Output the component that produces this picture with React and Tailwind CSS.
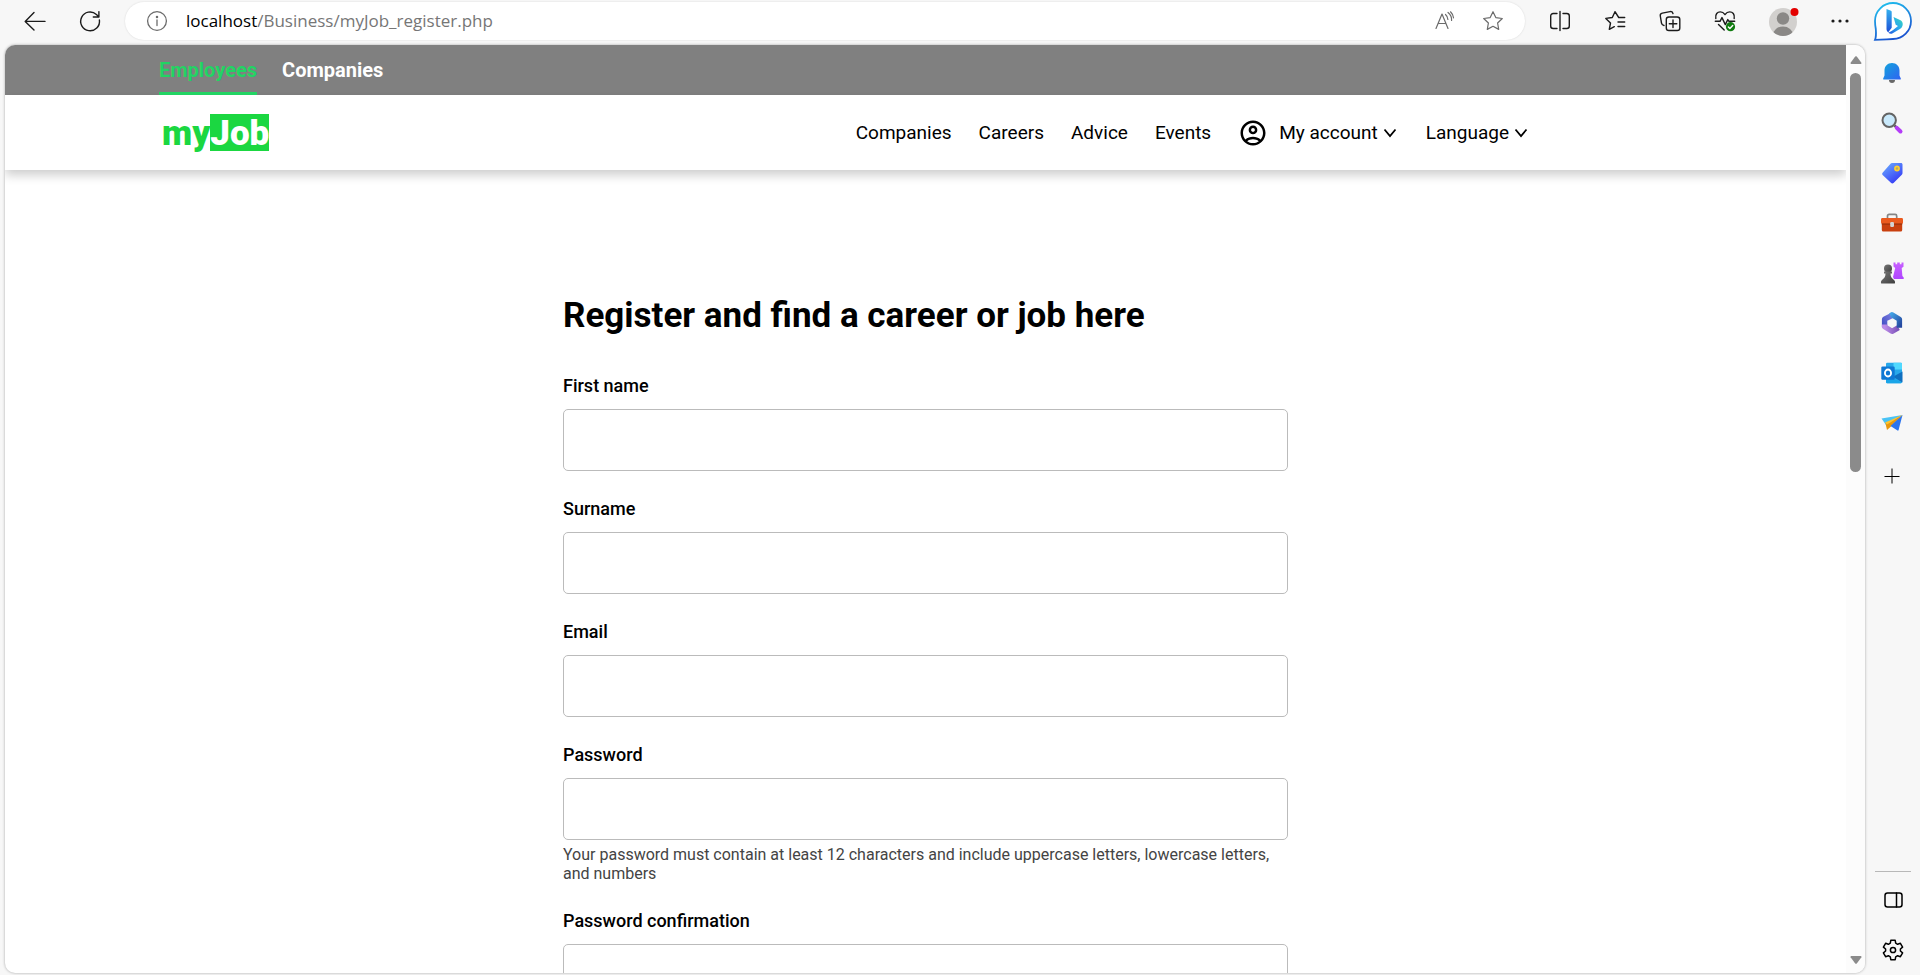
import React from "react";

const outline = {
  fill: "none",
  stroke: "currentColor",
  strokeWidth: 1.4,
  strokeLinecap: "round",
  strokeLinejoin: "round",
};

function Glyph({ children, size = 24, ...rest }) {
  return (
    <svg width={size} height={size} viewBox={`0 0 ${size} ${size}`} aria-hidden="true" {...rest}>
      {children}
    </svg>
  );
}

const BackIcon = () => (
  <Glyph {...outline}>
    <path d="M22 12.4H2.6M11 3.6 2.2 12.4 11 21" />
  </Glyph>
);

const ReloadIcon = () => (
  <Glyph {...outline}>
    <path d="M21.4 11a9.4 9.4 0 1 1-3-5.6L20.6 7.6M20.9 2.6V8h-5.6" />
  </Glyph>
);

const InfoIcon = () => (
  <Glyph {...outline} strokeWidth={1.3}>
    <circle cx="12" cy="12" r="9.4" />
    <path d="M12 11v5.5" />
    <circle cx="12" cy="7.9" r=".6" fill="currentColor" />
  </Glyph>
);

const ReadAloudIcon = () => (
  <Glyph {...outline} strokeWidth={1.2}>
    <path d="M3 19.500 9 5l6 14.500M5.200 14.500h7.600" />
    <path d="M12.500 5.500a7 7 0 0 1 2.400 5M15 3.500a9.500 9.500 0 0 1 3.600 8M17.500 2.800a10 10 0 0 1 3 6" />
  </Glyph>
);

const StarIcon = () => (
  <Glyph {...outline} strokeWidth={1.2}>
    <path d="m12 2.7 2.8 5.9 6.5.9-4.7 4.5 1.1 6.400L12 17.300l-5.700 3.100L7.400 14 2.700 9.500l6.500-.9z" />
  </Glyph>
);

const SplitIcon = () => (
  <Glyph {...outline}>
    <path d="M12 2.500v19M9 4.500H5.200a2.500 2.500 0 0 0-2.500 2.500v10a2.500 2.500 0 0 0 2.500 2.500H9M15 4.500h3.800a2.500 2.500 0 0 1 2.500 2.500v10a2.500 2.500 0 0 1-2.500 2.500H15" />
  </Glyph>
);

const FavoritesIcon = () => (
  <Glyph {...outline}>
    <path d="M21.700 8.500h-6L12 2.700 9.300 8.500l-6.500.9L7.500 14l-1.200 6.400 5-2.700M15 13h6.700M15 17.500h6.700" />
  </Glyph>
);

const CollectionsIcon = () => (
  <Glyph {...outline}>
    <rect x="8.3" y="8" width="13.5" height="13.5" rx="2.6" />
    <path d="M15 11v7.500M11.300 14.800h7.500M6 16.500c-1.500-.2-2.200-1-2.500-2.400L2.300 7c-.3-1.600.5-2.600 2-2.900L12 2.600c1.600-.3 2.700.4 3 2" />
  </Glyph>
);

const HealthIcon = () => (
  <Glyph {...outline}>
    <path d="M2.800 9.500C2 5 4.500 2.900 7.300 2.900c2 0 3.700 1.300 4.700 2.700 1-1.400 2.700-2.700 4.700-2.700 2.800 0 5.300 2.100 4.500 6.600M2.300 12.300H7L9 8.600l3.300 7 2.500-5 1.200 1.700h5.700M5.500 15.500l5.700 5.500" />
    <circle cx="17.5" cy="17.7" r="4.6" fill="#107c10" stroke="none" />
    <path d="m15.400 17.900 1.500 1.500 2.800-3" stroke="#fff" />
  </Glyph>
);

const ProfileIcon = () => (
  <Glyph size={34}>
    <clipPath id="avatar">
      <circle cx="16" cy="18" r="14" />
    </clipPath>
    <g clipPath="url(#avatar)">
      <rect width="34" height="34" fill="#d2d0ce" />
      <circle cx="16" cy="14.5" r="6.2" fill="#8a8886" />
      <ellipse cx="16" cy="31" rx="10" ry="8.5" fill="#8a8886" />
    </g>
    <circle cx="27.5" cy="8" r="4" fill="#e30000" />
  </Glyph>
);

const MoreIcon = () => (
  <Glyph fill="currentColor">
    <circle cx="5" cy="12" r="1.6" />
    <circle cx="12" cy="12" r="1.6" />
    <circle cx="19" cy="12" r="1.6" />
  </Glyph>
);

const BingIcon = () => (
  <Glyph size={42}>
    <defs>
      <linearGradient id="bubble" x1="0" y1="0" x2=".4" y2="1">
        <stop offset="0" stopColor="#22c8f0" />
        <stop offset="1" stopColor="#1a55d0" />
      </linearGradient>
      <linearGradient id="stem" x1="0" y1="0" x2="0" y2="1">
        <stop offset="0" stopColor="#35b2ee" />
        <stop offset="1" stopColor="#1d4fd7" />
      </linearGradient>
      <linearGradient id="bowl" x1="1" y1="0" x2="0" y2="1">
        <stop offset="0" stopColor="#35dcb8" />
        <stop offset=".5" stopColor="#2ba7ee" />
        <stop offset="1" stopColor="#2256dc" />
      </linearGradient>
    </defs>
    <path d="M21 3a18 18 0 1 1 0 36c-5.500 0-8 .8-18 .8 1.300-3 1.200-6 .8-10.800C3.300 26 3 24 3 21A18 18 0 0 1 21 3z" fill="#fff" stroke="url(#bubble)" strokeWidth="1.8" />
    <path d="m14.500 9 4.500 1.700c.4.200.7.600.7 1v16l-3.400 4.600c-1-.7-1.800-1.800-1.800-3.300z" fill="url(#stem)" />
    <path d="m21.500 17 6.500 3c2 1 3 2.600 2.700 4.800-.2 1.800-1.200 3.200-2.800 4.200l-7.200 4.200c-1.600.9-3 .5-4.400-.4 4.500-1.800 6-4 9.700-6.800l-2.300-1.300z" fill="url(#bowl)" />
  </Glyph>
);

const BellIcon = () => (
  <Glyph>
    <defs>
      <linearGradient id="bell" x1="0" y1="0" x2="1" y2="1">
        <stop offset="0" stopColor="#12a5dc" />
        <stop offset="1" stopColor="#2f62f2" />
      </linearGradient>
    </defs>
    <path d="M9 19h6a3 3 0 0 1-6 0z" fill="#686868" />
    <path d="M12 2c4.500 0 7.500 3.200 7.500 7.500v5l1.300 3c.2.500 0 1-.7 1H3.900c-.7 0-.9-.5-.7-1l1.300-3v-5C4.500 5.200 7.500 2 12 2z" fill="url(#bell)" />
  </Glyph>
);

const SearchIcon = () => (
  <Glyph>
    <path d="m14.500 14.500 2.500 2.500" stroke="#606060" strokeWidth="2.5" />
    <path d="m16.800 16.800 3.700 3.700" stroke="#b43cf8" strokeWidth="4" strokeLinecap="round" />
    <circle cx="9.2" cy="9.2" r="6.7" fill="#c9e9fb" stroke="#646464" strokeWidth="2" />
  </Glyph>
);

const TagIcon = () => (
  <Glyph>
    <defs>
      <linearGradient id="tag" x1="0" y1="0" x2=".7" y2="1">
        <stop offset="0" stopColor="#6db2ff" />
        <stop offset="1" stopColor="#3439f5" />
      </linearGradient>
    </defs>
    <path d="M12 2h9c.9 0 1.500.6 1.500 1.500V12c0 .7-.2 1.200-.7 1.700l-8 8c-.9.900-2 .9-2.900 0l-8-7.500c-1-.9-1-1.900-.1-2.800l7.700-8.700C11 2.200 11.400 2 12 2z" fill="url(#tag)" />
    <circle cx="17" cy="7.5" r="2.1" fill="#b8a860" stroke="#ffd02e" strokeWidth="1.6" />
  </Glyph>
);

const ToolboxIcon = () => (
  <Glyph>
    <path d="M7.500 8V5c0-1 .6-1.600 1.600-1.600h6c1 0 1.600.6 1.600 1.600v3" fill="none" stroke="#858585" strokeWidth="1.7" />
    <rect x="1.8" y="11" width="20.4" height="9.5" rx="1.5" fill="#c9400f" />
    <path d="M2.500 7h19c1 0 1.500.5 1.500 1.500v2.800c0 1-.5 1.700-1.500 1.700h-19C1.500 13 1 12.300 1 11.300V8.500C1 7.500 1.500 7 2.500 7z" fill="#eb5a1e" />
    <path d="M1.800 13h20.400" stroke="#8e2b08" />
    <rect x="10.2" y="11" width="3.8" height="5" rx="1.2" fill="#d3d3d3" />
  </Glyph>
);

const ChessIcon = () => (
  <Glyph>
    <defs>
      <linearGradient id="rook" x1="0" y1="0" x2="0" y2="1">
        <stop offset="0" stopColor="#c760ff" />
        <stop offset="1" stopColor="#b045ff" />
      </linearGradient>
      <linearGradient id="pawn" x1="0" y1="0" x2="1" y2="1">
        <stop offset="0" stopColor="#777" />
        <stop offset="1" stopColor="#3e3e3e" />
      </linearGradient>
    </defs>
    <path d="M13.500 1.500h2v1.700h1.700V1.500h2.600v1.700h1.700V1.500h2v4.300L21.700 7l.7 8 1.300 1.500v1.500H14l-1-2 2.200-9-1.700-1.500z" fill="url(#rook)" />
    <circle cx="8" cy="7.5" r="4" fill="url(#pawn)" />
    <path d="M4 10.500h8v2h-1.500c0 3 1 4.600 3.500 6.500 1 .8 1.300 2.200.8 3.500H1.200C.7 21.200 1 19.800 2 19c2.500-1.900 3.500-3.500 3.500-6.500H4z" fill="url(#pawn)" />
  </Glyph>
);

const Microsoft365Icon = () => (
  <Glyph fill="none" strokeWidth="5.4" strokeLinejoin="round">
    <defs>
      <linearGradient id="office-a" x1="0" y1="1" x2="1" y2="0">
        <stop offset="0" stopColor="#4551c6" />
        <stop offset="1" stopColor="#7d7ee0" />
      </linearGradient>
      <linearGradient id="office-b" x1="0" y1="0" x2="1" y2="0">
        <stop offset="0" stopColor="#bd8ce8" />
        <stop offset="1" stopColor="#7a52b8" />
      </linearGradient>
      <linearGradient id="office-c" x1="0" y1="0" x2="1" y2="1">
        <stop offset="0" stopColor="#43a3e5" />
        <stop offset="1" stopColor="#24479f" />
      </linearGradient>
    </defs>
    <path d="M13 4 4.600 8.200v8" stroke="url(#office-a)" />
    <path d="M4.600 13.500v2.300l7.400 4.500 6.500-3.600" stroke="url(#office-b)" />
    <path d="m10.500 4.700 1.500-.9 7.400 4.400v8.500" stroke="url(#office-c)" />
  </Glyph>
);

const OutlookIcon = () => (
  <Glyph>
    <rect x="6" y="1.8" width="16" height="20.4" rx="1.2" fill="#28a8ea" />
    <path d="M13.500 1.800h7.300c.7 0 1.200.5 1.200 1.200v5.500h-8.500z" fill="#50d9ff" />
    <path d="M6 8h8v6H6z" fill="#0364b8" />
    <path d="M13 15.800 22.500 10.500v11z" fill="#0f6fc0" />
    <path d="M6 14.500 22 21.500c-.3.500-.8.700-1.500.7h-13c-.9 0-1.500-.6-1.500-1.500z" fill="#1aa5e8" />
    <rect x="1.3" y="5.5" width="13.4" height="13.2" rx="1.2" fill="#0f78d4" />
    <ellipse cx="8" cy="12" rx="3.1" ry="3.5" fill="none" stroke="#fff" strokeWidth="1.8" />
  </Glyph>
);

const DropIcon = () => (
  <Glyph>
    <path d="M1.500 7.500 22.500 4 6 14z" fill="#49c3f5" />
    <path d="M22.500 4 5.500 12.500 7 19l4-3.500z" fill="#e9980c" />
    <path d="m22.500 4-12 11 7 4.500c.5.300.9.100 1.100-.4z" fill="#2b74ee" />
    <path d="M22.500 4 5 11.500l2 2z" fill="#ffc431" />
  </Glyph>
);

const PlusIcon = () => (
  <Glyph {...outline} strokeLinecap="butt" strokeWidth={1}>
    <path d="M12 4.500v15M4.500 12.500h15" />
  </Glyph>
);

const PanelIcon = () => (
  <Glyph {...outline} strokeWidth={1.5}>
    <rect x="4" y="5" width="17" height="14" rx="2.5" />
    <path d="M15.500 5v14" />
  </Glyph>
);

const GearIcon = () => (
  <Glyph {...outline} strokeWidth={1.5}>
    <circle cx="12" cy="12" r="2.6" />
    <path d="m9.800 2.300-.5 2.900-1.900 1.100-2.800-1-2.200 3.800 2.200 1.900v2l-2.200 1.900 2.200 3.800 2.800-1 1.900 1.100.5 2.900h4.400l.5-2.900 1.900-1.100 2.800 1 2.200-3.800-2.200-1.900v-2l2.200-1.900-2.200-3.800-2.800 1-1.900-1.100-.5-2.900z" />
  </Glyph>
);

const AccountIcon = () => (
  <svg width="30" height="30" viewBox="0 0 24 24" fill="currentColor" aria-hidden="true">
    <path d="M12 2C6.480 2 2 6.480 2 12s4.480 10 10 10 10-4.480 10-10S17.520 2 12 2zM7.350 18.500C8.660 17.560 10.260 17 12 17s3.340.56 4.650 1.500C15.340 19.440 13.740 20 12 20s-3.340-.56-4.650-1.500zm10.790-1.380C16.450 15.800 14.320 15 12 15s-4.450.8-6.140 2.120C4.700 15.730 4 13.950 4 12c0-4.420 3.580-8 8-8s8 3.580 8 8c0 1.950-.7 3.730-1.860 5.120z" />
    <path d="M12 6c-1.930 0-3.500 1.570-3.500 3.500S10.070 13 12 13s3.500-1.570 3.500-3.500S13.930 6 12 6zm0 5c-.83 0-1.500-.67-1.500-1.500S11.170 8 12 8s1.500.67 1.500 1.500S12.830 11 12 11z" />
  </svg>
);

const Chevron = () => (
  <svg width="14" height="10" viewBox="0 0 14 10" fill="none" stroke="currentColor" strokeWidth="1.8" aria-hidden="true">
    <path d="m1.500 1.500 5.500 6.500 5.500-6.500" />
  </svg>
);

function IconButton({ label, className = "", children }) {
  return (
    <button type="button" aria-label={label} className={`flex shrink-0 items-center justify-center ${className}`}>
      {children}
    </button>
  );
}

function Toolbar() {
  return (
    <header className="flex h-[45px] shrink-0 items-start pt-[2px] text-[#1b1b1b]">
      <div className="flex h-[38px] items-center gap-[31px] pl-[23px]">
        <IconButton label="Back"><BackIcon /></IconButton>
        <IconButton label="Refresh"><ReloadIcon /></IconButton>
      </div>
      <div className="ml-[23px] flex h-[38px] min-w-0 flex-1 items-center rounded-full bg-white px-5 text-[#6b6b6b] shadow-[0_0_2px_#0002]">
        <IconButton label="Site information"><InfoIcon /></IconButton>
        <div
          role="textbox"
          aria-label="Address"
          contentEditable
          suppressContentEditableWarning
          className="ml-[17px] min-w-0 flex-1 truncate font-['Open_Sans',sans-serif] text-[17px] leading-6 text-[#767676] outline-none"
        >
          <span className="text-black">localhost</span>/Business/myJob_register.php
        </div>
        <IconButton label="Read aloud"><ReadAloudIcon /></IconButton>
        <IconButton label="Add to favorites" className="ml-6"><StarIcon /></IconButton>
      </div>
      <div className="flex h-[38px] items-center gap-[31px] pl-[23px]">
        <IconButton label="Split screen"><SplitIcon /></IconButton>
        <IconButton label="Favorites"><FavoritesIcon /></IconButton>
        <IconButton label="Collections"><CollectionsIcon /></IconButton>
        <IconButton label="Browser essentials"><HealthIcon /></IconButton>
      </div>
      <div className="flex h-[38px] items-center gap-[27px] pl-[30px] pr-[13px]">
        <IconButton label="Profile"><ProfileIcon /></IconButton>
        <IconButton label="More"><MoreIcon /></IconButton>
      </div>
    </header>
  );
}

const apps = [
  ["Notifications", BellIcon],
  ["Search", SearchIcon],
  ["Shopping", TagIcon],
  ["Tools", ToolboxIcon],
  ["Games", ChessIcon],
  ["Microsoft 365", Microsoft365Icon],
  ["Outlook", OutlookIcon],
  ["Drop", DropIcon],
  ["Customize", PlusIcon],
];

function Sidebar() {
  return (
    <aside className="flex w-[55px] shrink-0 flex-col items-center">
      <IconButton label="Bing chat" className="h-[42px]"><BingIcon /></IconButton>
      <div className="mt-[6px] flex flex-col pr-px">
        {apps.map(([label, Icon]) => (
          <IconButton key={label} label={label} className="h-[50px] last:h-[56px]"><Icon /></IconButton>
        ))}
      </div>
      <div className="mt-auto flex flex-col items-center border-t border-[#b8b8b8] px-[6px] pt-[3px]">
        <IconButton label="Toggle sidebar" className="h-[50px]"><PanelIcon /></IconButton>
        <IconButton label="Settings" className="h-[50px]"><GearIcon /></IconButton>
      </div>
    </aside>
  );
}

function AudienceBar() {
  return (
    <nav aria-label="Audience" className="flex h-[50px] gap-[25px] bg-[#808080] pl-[154px] text-[20px] font-bold leading-[50px] text-white">
      <a href="#employees" className="border-b-[3px] border-[#22d463] text-[#22d463]">Employees</a>
      <a href="#companies">Companies</a>
    </nav>
  );
}

function MainNav() {
  return (
    <div className="flex h-[75px] items-center justify-between bg-white pl-[157px] pr-[318px] shadow-[0_5px_10px_#0003]">
      <a href="#home" className="flex text-[35px] font-black leading-[34px] text-[#1bd741]">
        <span className="pt-[3px]">my</span>
        <span className="bg-[#1bd741] pt-[3px] text-white">Job</span>
      </a>
      <nav aria-label="Main" className="flex items-center gap-[27px] text-[19px] leading-6 text-black">
        <a href="#list">Companies</a>
        <a href="#careers">Careers</a>
        <a href="#advice">Advice</a>
        <a href="#events">Events</a>
        <button type="button" className="flex items-center gap-[5px] pr-[2px]">
          <AccountIcon />
          <span className="pl-[6px]">My account</span>
          <Chevron />
        </button>
        <button type="button" className="flex items-center gap-[5px]">
          Language
          <Chevron />
        </button>
      </nav>
    </div>
  );
}

const fields = [
  { id: "first-name", label: "First name", type: "text" },
  { id: "surname", label: "Surname", type: "text" },
  { id: "email", label: "Email", type: "email" },
  {
    id: "password",
    label: "Password",
    type: "password",
    hint: "Your password must contain at least 12 characters and include uppercase letters, lowercase letters, and numbers",
  },
  { id: "confirmation", label: "Password confirmation", type: "password" },
];

function RegisterForm() {
  return (
    <form className="mx-auto w-full max-w-[725px] pt-[124px] text-black">
      <h1 className="text-[35px] font-bold leading-[44px]">Register and find a career or job here</h1>
      <div className="mt-[36px] flex flex-col gap-[26px]">
        {fields.map(({ id, label, type, hint }) => (
          <div key={id} className="flex flex-col">
            <label htmlFor={id} className="text-[18px] font-medium leading-[24px]">{label}</label>
            <input
              id={id}
              type={type}
              aria-describedby={hint ? `${id}-hint` : undefined}
              className="mt-[11px] h-[62px] rounded-[5px] border border-[#bbb] bg-white px-4 text-[18px]"
            />
            {hint && (
              <p id={`${id}-hint`} className="mt-[5px] text-[16px] leading-[19px] text-[#444]">{hint}</p>
            )}
          </div>
        ))}
      </div>
    </form>
  );
}

function ScrollTrack() {
  return (
    <div aria-hidden="true" className="flex w-[19px] shrink-0 flex-col items-center bg-[#fcfcfc] pb-[9px] pt-[11px]">
      <svg width="12" height="8" viewBox="0 0 12 8" fill="#8b8b8b"><path d="M5.200.6q.8-.9 1.600 0l4.600 6.200q.4 1.200-.8 1.200H1.400Q.2 8 .6 6.800z" /></svg>
      <div className="mt-[9px] h-[399px] w-[11px] rounded-full bg-[#8b8b8b]" />
      <svg className="mt-auto" width="12" height="8" viewBox="0 0 12 8" fill="#8b8b8b"><path d="M5.200 7.400q.8.9 1.600 0l4.600-6.200Q11.800 0 10.600 0H1.400Q.2 0 .6 1.200z" /></svg>
    </div>
  );
}

export default function App() {
  return (
    <div className="flex h-screen overflow-hidden bg-[#f7f7f7] font-[Roboto,sans-serif]">
      <div className="flex min-w-0 flex-1 flex-col">
        <Toolbar />
        <div className="mb-[2px] ml-[5px] flex min-h-0 flex-1 overflow-hidden rounded-[10px] bg-white shadow-[0_0_3px_#0005]">
          <main className="min-w-0 flex-1 overflow-hidden">
            <AudienceBar />
            <MainNav />
            <RegisterForm />
          </main>
          <ScrollTrack />
        </div>
      </div>
      <Sidebar />
    </div>
  );
}
